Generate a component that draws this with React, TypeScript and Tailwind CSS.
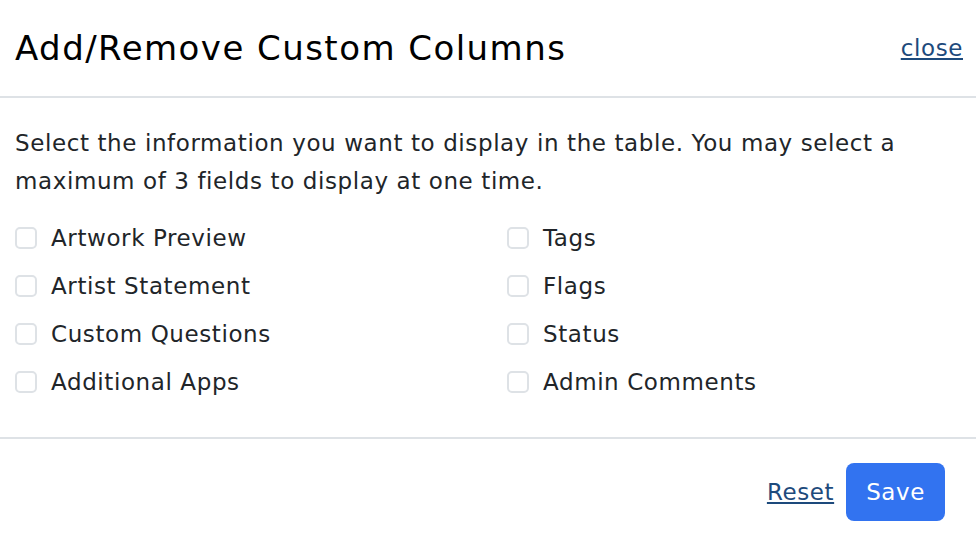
import React from 'react'

const left = ['Artwork Preview', 'Artist Statement', 'Custom Questions', 'Additional Apps']
const right = ['Tags', 'Flags', 'Status', 'Admin Comments']

function Option({ label }: { label: string }) {
  return (
    <label className="flex items-center h-12 cursor-pointer">
      <input
        type="checkbox"
        className="appearance-none w-[22px] h-[22px] border-2 border-[#dee2e6] rounded-[5px] bg-white mr-[14px] shrink-0"
      />
      <span>{label}</span>
    </label>
  )
}

export default function App() {
  return (
    <div className="w-[976px] h-[534px] bg-white text-[#212529] overflow-hidden" style={{ fontFamily: '"DejaVu Sans", Verdana, sans-serif' }}>
      {/* Header */}
      <div className="flex items-center justify-between h-[98px] px-[15px] border-b-2 border-[#dee2e6]">
        <h2 className="text-[34px] tracking-[1.45px] text-black">Add/Remove Custom Columns</h2>
        <a href="#" className="text-[23px] tracking-[0.6px] text-[#1d4a7c] underline mr-[-2px]">close</a>
      </div>

      {/* Body */}
      <div className="px-[15px] pt-[26px] pb-[31px] text-[23px] tracking-[0.6px]">
        <p className="leading-[38px] mb-[14px]">
          Select the information you want to display in the table. You may select a maximum of 3 fields to display at one time.
        </p>
        <div className="grid grid-cols-[492px_1fr]">
          <div>
            {left.map((l) => (
              <Option key={l} label={l} />
            ))}
          </div>
          <div>
            {right.map((l) => (
              <Option key={l} label={l} />
            ))}
          </div>
        </div>
      </div>

      {/* Footer */}
      <div className="flex items-center justify-end gap-3 border-t-2 border-[#dee2e6] px-[31px] pt-[24px]">
        <a href="#" className="text-[23px] tracking-[0.6px] text-[#1d4a7c] underline">Reset</a>
        <button className="h-[58px] px-[20px] rounded-lg bg-[#3273f0] text-white text-[23px] tracking-[0.6px]">Save</button>
      </div>
    </div>
  )
}
